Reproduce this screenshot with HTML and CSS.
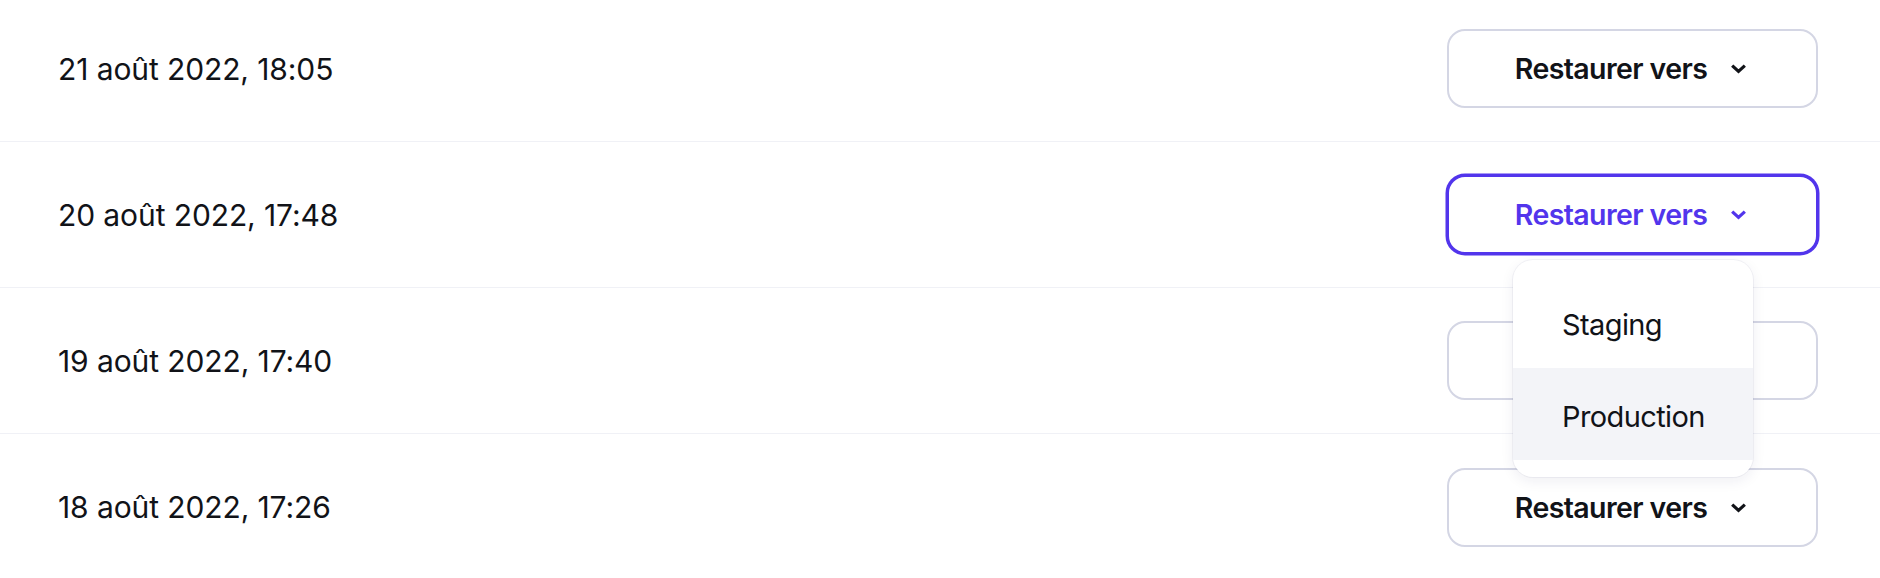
FILE: index.html
```html
<!DOCTYPE html>
<html lang="fr">
<head>
<meta charset="utf-8">
<link rel="stylesheet" href="styles.css">
</head>
<body>
<div class="list">
  <div class="row">
    <span class="date">21 août 2022, 18:05</span>
    <div class="menu">
      <button class="btn"><span>Restaurer vers</span><svg class="chev" viewBox="0 0 16 10" width="15" height="10"><path d="M2.5 2.5l5.5 5 5.5-5" fill="none" stroke="currentColor" stroke-width="3.4" stroke-linecap="square"/></svg></button>
    </div>
  </div>
  <div class="row">
    <span class="date">20 août 2022, 17:48</span>
    <div class="menu">
      <button class="btn active"><span>Restaurer vers</span><svg class="chev" viewBox="0 0 16 10" width="15" height="10"><path d="M2.5 2.5l5.5 5 5.5-5" fill="none" stroke="currentColor" stroke-width="3.4" stroke-linecap="square"/></svg></button>
      <div class="dropdown">
        <div class="item">Staging</div>
        <div class="item hover">Production</div>
      </div>
    </div>
  </div>
  <div class="row">
    <span class="date">19 août 2022, 17:40</span>
    <div class="menu">
      <button class="btn"><span>Restaurer vers</span><svg class="chev" viewBox="0 0 16 10" width="15" height="10"><path d="M2.5 2.5l5.5 5 5.5-5" fill="none" stroke="currentColor" stroke-width="3.4" stroke-linecap="square"/></svg></button>
    </div>
  </div>
  <div class="row last">
    <span class="date">18 août 2022, 17:26</span>
    <div class="menu">
      <button class="btn"><span>Restaurer vers</span><svg class="chev" viewBox="0 0 16 10" width="15" height="10"><path d="M2.5 2.5l5.5 5 5.5-5" fill="none" stroke="currentColor" stroke-width="3.4" stroke-linecap="square"/></svg></button>
    </div>
  </div>
</div>
</body>
</html>
```
FILE: styles.css
```css
* { box-sizing: border-box; }
html, body { margin: 0; background: #fff; }
body {
  font-family: Inter, "Noto Sans", sans-serif;
  color: #111318;
  overflow: hidden;
}
.list {
  margin-top: -4px;
}
.row {
  display: flex;
  align-items: center;
  justify-content: space-between;
  height: 146px;
  padding: 0 62px 0 58px;
  border-bottom: 1px solid #f0f1f6;
}
.row.last { border-bottom: none; }
.date {
  font-size: 30px;
  font-weight: 400;
  letter-spacing: -0.1px;
}
.menu {
  position: relative;
}
.btn {
  display: flex;
  align-items: center;
  justify-content: center;
  gap: 24px;
  width: 371px;
  height: 79px;
  padding: 0 4px 0 0;
  border: 2px solid #d4d6e4;
  border-radius: 18px;
  background: #fff;
  font-family: inherit;
  font-size: 28.5px;
  font-weight: 600;
  letter-spacing: -0.6px;
  color: #111318;
}
.chev { display: block; margin-top: 1px; }
.btn.active {
  border: 2px solid #5235ec;
  box-shadow: 0 0 0 1.5px #5235ec;
  color: #5235ec;
}
.dropdown {
  position: absolute;
  top: calc(100% + 6px);
  left: 66px;
  width: 240px;
  padding: 16px 0 17px;
  background: #fff;
  border-radius: 20px;
  box-shadow: 0 0 0 1px rgba(30, 35, 90, 0.05), 0 4px 14px rgba(30, 35, 90, 0.07);
  z-index: 2;
}
.item {
  height: 92px;
  display: flex;
  align-items: center;
  padding: 5px 0 0 49px;
  font-size: 29px;
  font-weight: 400;
  letter-spacing: -0.6px;
}
.item.hover { background: #f3f4f8; }
```
